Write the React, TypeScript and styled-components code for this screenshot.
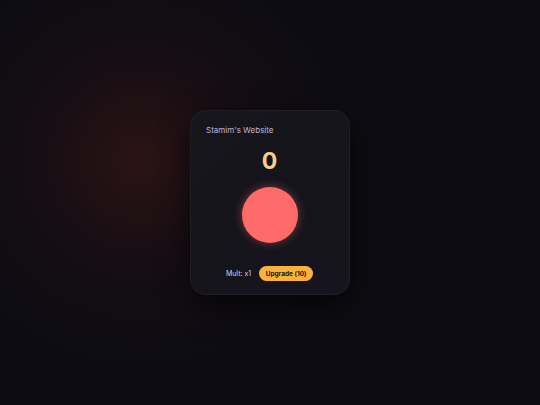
import styled, { createGlobalStyle } from 'styled-components';

const Global = createGlobalStyle`
    html, body {
        margin: 0;
        padding: 0;
        height: 100%;
        background: #0c0c12;
        font-family: Inter, "Noto Sans", sans-serif;
    }
    #root {
        height: 100%;
    }
`;

const Page = styled.div`
    height: 100vh;
    display: flex;
    align-items: center;
    justify-content: center;
    background:
        radial-gradient(circle at 140px 160px, rgba(56, 22, 22, 0.7) 0%, rgba(34, 16, 20, 0.45) 100px, rgba(12, 12, 18, 0) 210px),
        #0c0c12;
`;

const Card = styled.div`
    width: 160px;
    height: 185px;
    box-sizing: border-box;
    padding: 14px 16px 14px 15px;
    border-radius: 16px;
    background: linear-gradient(135deg, #17161d 0%, #15141b 55%, #16151f 100%);
    border: 1px solid rgba(255, 255, 255, 0.04);
    box-shadow: 0 10px 30px rgba(0, 0, 0, 0.6);
    display: flex;
    flex-direction: column;
`;

const Title = styled.div`
    font-size: 8px;
    color: #bdb9d4;
    line-height: 10px;
`;

const Count = styled.div`
    margin-top: 14px;
    text-align: center;
    font-size: 23px;
    font-weight: 700;
    line-height: 24px;
    color: #f7cf86;
`;

const Orb = styled.button`
    margin: 14px auto 0;
    width: 56px;
    height: 56px;
    border-radius: 50%;
    border: none;
    padding: 0;
    background: #ff6a6a;
    box-shadow: 0 0 10px rgba(255, 106, 106, 0.45);
`;

const Bottom = styled.div`
    margin-top: auto;
    margin-bottom: -1px;
    display: flex;
    align-items: center;
    justify-content: center;
    gap: 8px;
`;

const Mult = styled.span`
    font-size: 7px;
    color: #d6d3e2;
`;

const Upgrade = styled.button`
    height: 15px;
    width: 54px;
    border: none;
    border-radius: 8px;
    background: #fbb13c;
    color: #1a1410;
    font-family: Inter, "Noto Sans", sans-serif;
    font-size: 6.5px;
    font-weight: 700;
    padding: 0;
`;

export default function App() {
    return (
        <Page>
            <Global />
            <Card>
                <Title>Stamim's Website</Title>
                <Count>0</Count>
                <Orb aria-label="click" />
                <Bottom>
                    <Mult>Mult: x1</Mult>
                    <Upgrade>Upgrade (10)</Upgrade>
                </Bottom>
            </Card>
        </Page>
    );
}
